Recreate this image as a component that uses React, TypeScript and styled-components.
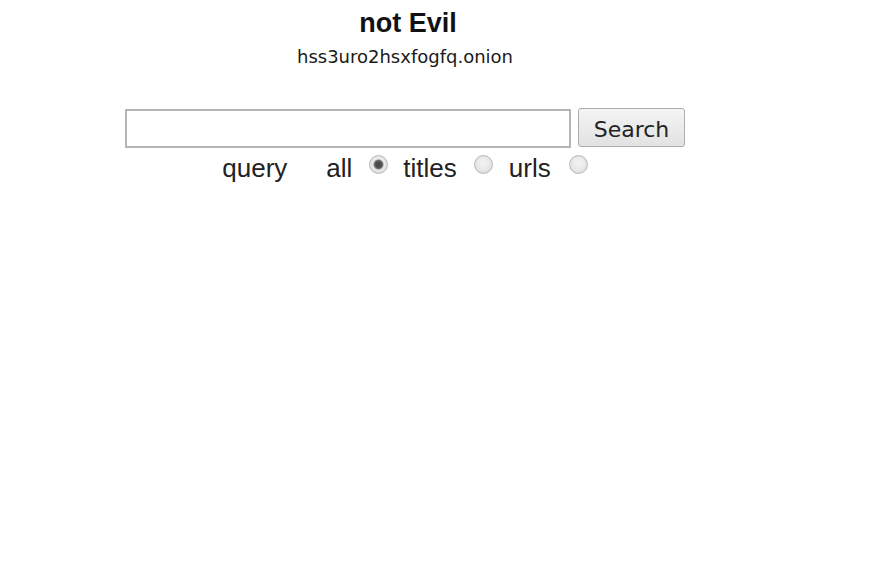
import React from "react";
import styled, { createGlobalStyle } from "styled-components";

const GlobalStyle = createGlobalStyle`
  html, body {
    margin: 0;
    padding: 0;
    background: #ffffff;
  }
  body {
    font-family: "Liberation Sans", Arial, sans-serif;
    color: #111;
  }
`;

const Page = styled.div`
  width: 810px;
  display: flex;
  flex-direction: column;
  align-items: center;
  padding-top: 8px;
`;

const Title = styled.h1`
  margin: 0 0 0 6px;
  font-family: "Liberation Sans", Arial, sans-serif;
  font-size: 27px;
  line-height: 30px;
  font-weight: 700;
  color: #111;
`;

const Address = styled.div`
  margin-top: 8px;
  font-family: "DejaVu Sans", Tahoma, sans-serif;
  font-size: 18px;
  line-height: 22px;
  color: #1a1a1a;
`;

const SearchForm = styled.form`
  margin-top: 40px;
  display: flex;
  flex-direction: column;
  align-items: center;
`;

const SearchBar = styled.div`
  display: flex;
  align-items: flex-start;
  gap: 7px;
`;

const QueryInput = styled.input`
  box-sizing: border-box;
  width: 446px;
  height: 39px;
  margin: 1px 0 0;
  padding: 2px 6px;
  border: 2px solid #b4b4b4;
  border-radius: 0;
  background: #fff;
  font-family: "Liberation Sans", Arial, sans-serif;
  font-size: 20px;
  outline: none;
`;

const SubmitButton = styled.button`
  box-sizing: border-box;
  width: 107px;
  height: 39px;
  margin: 0;
  padding: 3px 0 0;
  border: 1px solid #acacac;
  border-radius: 3px;
  background: linear-gradient(#f4f4f4, #e2e2e2);
  font-family: "DejaVu Sans", Tahoma, sans-serif;
  font-size: 22px;
  color: #222;
  cursor: pointer;
`;

const Options = styled.div`
  margin-top: 5px;
  display: flex;
  align-items: center;
  height: 30px;
  font-size: 26px;
  line-height: 30px;
  color: #222;
`;

const Label = styled.span<{ $space: number }>`
  margin-right: ${(p) => p.$space}px;
`;

const Radio = styled.input.attrs({ type: "radio" })<{ $space: number }>`
  appearance: none;
  -webkit-appearance: none;
  box-sizing: border-box;
  width: 19px;
  height: 19px;
  margin: -7px ${(p) => p.$space}px 0 0;
  border: 1px solid #b9b9b9;
  border-radius: 50%;
  background: radial-gradient(circle at 50% 40%, #f3f3f3 0%, #e4e4e4 70%, #d6d6d6 100%);
  box-shadow: inset 0 0 2px rgba(0, 0, 0, 0.08);

  &:checked {
    background:
      radial-gradient(circle, #444 0, #4f4f4f 3px, #808080 4.5px, transparent 5.5px),
      radial-gradient(circle at 50% 40%, #f3f3f3 0%, #e4e4e4 70%, #d6d6d6 100%);
  }
`;

const App = (): React.JSX.Element => {
  return (
    <>
      <GlobalStyle />
      <Page>
        <Title>not Evil</Title>
        <Address>hss3uro2hsxfogfq.onion</Address>
        <SearchForm onSubmit={(e) => e.preventDefault()}>
          <SearchBar>
            <QueryInput type="text" name="q" />
            <SubmitButton type="submit">Search</SubmitButton>
          </SearchBar>
          <Options>
            <Label $space={39}>query</Label>
            <Label $space={17}>all</Label>
            <Radio name="field" value="all" defaultChecked $space={15} />
            <Label $space={17}>titles</Label>
            <Radio name="field" value="titles" $space={16} />
            <Label $space={18}>urls</Label>
            <Radio name="field" value="urls" $space={0} />
          </Options>
        </SearchForm>
      </Page>
    </>
  );
};

export default App;
